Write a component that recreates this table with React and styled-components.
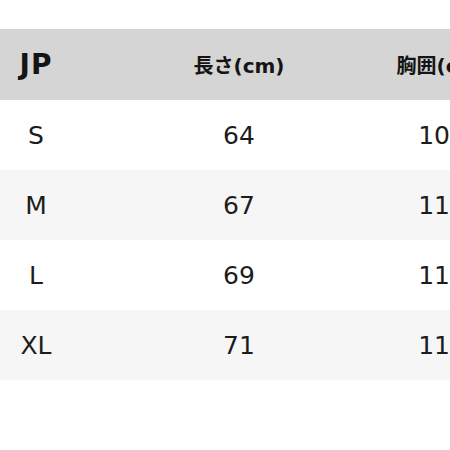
import React from "react";
import styled, { createGlobalStyle } from "styled-components";

const GlobalStyle = createGlobalStyle`
  html, body {
    margin: 0;
    padding: 0;
    background: #fff;
    overflow: hidden;
  }
  body {
    font-family: "DejaVu Sans", "Noto Sans CJK JP", sans-serif;
    color: #1c1c1c;
  }
`;

const Page = styled.div`
  padding-top: 29px;
  width: 450px;
`;

const Table = styled.div`
  display: grid;
  grid-template-columns: 72px 334px 72px;
`;

const Row = styled.div`
  display: contents;
`;

const Cell = styled.div`
  height: ${p => (p.head ? 71 : 70)}px;
  display: flex;
  align-items: center;
  justify-content: center;
  white-space: nowrap;
  background: ${p => (p.head ? "#d5d5d5" : p.stripe ? "#f6f6f6" : "#fff")};
  font-size: ${p => (p.head ? (p.first ? "28px" : "20px") : "25px")};
  font-weight: ${p => (p.head ? 700 : 400)};
  letter-spacing: ${p => (p.first ? "1px" : "0")};
  color: ${p => (p.head ? "#141414" : "#1c1c1c")};
`;

const head = ["JP", "長さ(cm)", "胸囲(cm)"];
const rows = [
  ["S", "64", "102"],
  ["M", "67", "110"],
  ["L", "69", "116"],
  ["XL", "71", "118"],
];

export default function App() {
  return (
    <Page>
      <GlobalStyle />
      <Table>
        <Row>
          {head.map((h, i) => (
            <Cell key={h} head first={i === 0}>
              {h}
            </Cell>
          ))}
        </Row>
        {rows.map((r, ri) => (
          <Row key={r[0]}>
            {r.map((c, ci) => (
              <Cell key={ci} stripe={ri % 2 === 1}>
                {c}
              </Cell>
            ))}
          </Row>
        ))}
      </Table>
    </Page>
  );
}
